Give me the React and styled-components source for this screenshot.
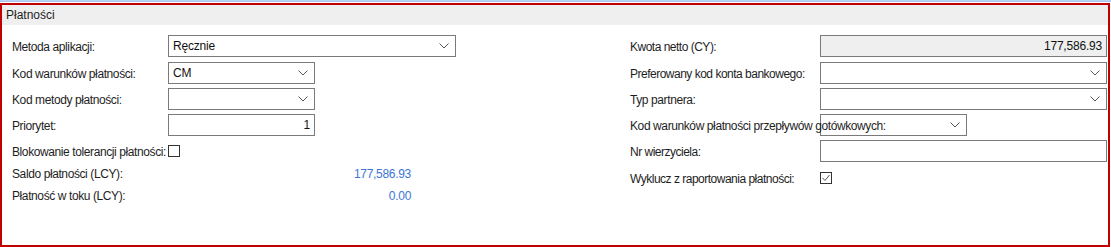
import React from "react";
import styled, { createGlobalStyle } from "styled-components";

const Global = createGlobalStyle`
  html, body { margin: 0; padding: 0; background: #ffffff; }
  body { font-family: "Liberation Sans", Arial, sans-serif; font-size: 12px; color: #1e1e1e; letter-spacing: -0.4px; }
  * { box-sizing: border-box; }
`;

const Page = styled.div`
  width: 1111px;
  height: 247px;
  display: flex;
  flex-direction: column;
  background: #ffffff;
`;

const TopStrip = styled.div`
  height: 2px;
  flex-shrink: 0;
  background: linear-gradient(#c4daf6, #9dbfec);
  margin-bottom: 1px;
`;

const Panel = styled.section`
  width: 1110px;
  flex: 1;
  border: 2px solid #c00000;
  display: flex;
  flex-direction: column;
`;

const Header = styled.div`
  height: 20px;
  background: #efefef;
  padding: 0 4px;
  display: flex;
  align-items: center;
  font-size: 12px;
  letter-spacing: 0;
  color: #1e1e1e;
`;

const Body = styled.div`
  display: grid;
  grid-template-columns: 443px 1fr;
  column-gap: 175px;
  padding: 10px 1px 0 10px;
`;

const Column = styled.div`
  display: flex;
  flex-direction: column;
`;

const Row = styled.div`
  display: flex;
  align-items: center;
  height: 22px;
  margin-top: ${(p) => p.$mt || 0}px;
`;

const Label = styled.div`
  width: ${(p) => p.$w}px;
  flex-shrink: 0;
  white-space: nowrap;
  padding-top: 2px;
  position: relative;
  z-index: 1;
  letter-spacing: ${(p) => (p.$tight ? "-0.5px" : "-0.4px")};
`;

const Box = styled.div`
  width: ${(p) => (p.$w ? `${p.$w}px` : "auto")};
  flex: ${(p) => (p.$w ? "0 0 auto" : "1")};
  height: 22px;
  border: 1px solid #7a7a7a;
  background: ${(p) => (p.$disabled ? "#efefef" : "transparent")};
  display: flex;
  align-items: center;
  justify-content: ${(p) => (p.$right ? "flex-end" : "space-between")};
  padding: 0 ${(p) => (p.$right ? 4 : 6)}px 0 4px;
  color: #111;
  letter-spacing: -0.2px;
`;

const Chevron = () => (
  <svg width="10" height="6" viewBox="0 0 10 6" style={{ flexShrink: 0 }}>
    <polyline points="0.5,0.5 5,5 9.5,0.5" fill="none" stroke="#555" strokeWidth="1" />
  </svg>
);

const Check = styled.div`
  width: 12px;
  height: 12px;
  border: 1px solid #333;
  background: #fff;
  display: flex;
  align-items: center;
  justify-content: center;
`;

const Value = styled.div`
  width: 243px;
  text-align: right;
  color: #3b76d8;
  letter-spacing: -0.3px;
  padding-top: 2px;
`;

const Select = ({ w, value }) => (
  <Box $w={w}>
    <span>{value}</span>
    <Chevron />
  </Box>
);

export default function App() {
  return (
    <>
      <Global />
      <Page>
        <TopStrip />
        <Panel>
          <Header>Płatności</Header>
          <Body>
            <Column>
              <Row>
                <Label $w={156}>Metoda aplikacji:</Label>
                <Select w={288} value="Ręcznie" />
              </Row>
              <Row $mt={5}>
                <Label $w={156}>Kod warunków płatności:</Label>
                <Select w={147} value="CM" />
              </Row>
              <Row $mt={4}>
                <Label $w={156}>Kod metody płatności:</Label>
                <Select w={147} value="" />
              </Row>
              <Row $mt={4}>
                <Label $w={156}>Priorytet:</Label>
                <Box $w={147} $right>1</Box>
              </Row>
              <Row $mt={4}>
                <Label $w={156}>Blokowanie tolerancji płatności:</Label>
                <Check />
              </Row>
              <Row>
                <Label $w={156}>Saldo płatności (LCY):</Label>
                <Value>177,586.93</Value>
              </Row>
              <Row>
                <Label $w={156}>Płatność w toku (LCY):</Label>
                <Value>0.00</Value>
              </Row>
            </Column>
            <Column>
              <Row>
                <Label $w={190} $tight>Kwota netto (CY):</Label>
                <Box $disabled $right>177,586.93</Box>
              </Row>
              <Row $mt={5}>
                <Label $w={190} $tight>Preferowany kod konta bankowego:</Label>
                <Box>
                  <span />
                  <Chevron />
                </Box>
              </Row>
              <Row $mt={4}>
                <Label $w={190}>Typ partnera:</Label>
                <Box>
                  <span />
                  <Chevron />
                </Box>
              </Row>
              <Row $mt={4}>
                <Label $w={190}>Kod warunków płatności przepływów gotówkowych:</Label>
                <Select w={147} value="" />
              </Row>
              <Row $mt={4}>
                <Label $w={190} $tight>Nr wierzyciela:</Label>
                <Box />
              </Row>
              <Row $mt={5}>
                <Label $w={190} $tight>Wyklucz z raportowania płatności:</Label>
                <Check>
                  <svg width="10" height="10" viewBox="0 0 10 10">
                    <polyline points="1.5,5 4,7.5 8.5,2" fill="none" stroke="#555" strokeWidth="1" />
                  </svg>
                </Check>
              </Row>
            </Column>
          </Body>
        </Panel>
      </Page>
    </>
  );
}
